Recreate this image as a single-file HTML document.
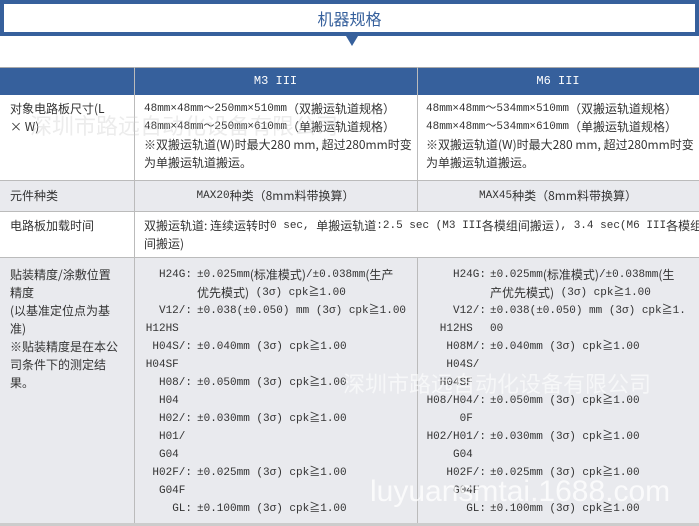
<!DOCTYPE html>
<html><head><meta charset="utf-8"><style>
*{margin:0;padding:0;box-sizing:border-box}
body{width:699px;height:526px;overflow:hidden;background:#fff;position:relative;font-family:"Liberation Mono","Noto Sans CJK SC",monospace;font-size:11px;color:#333}
.a{position:absolute;white-space:nowrap;line-height:18px}
.a div{height:18px;line-height:18px;white-space:nowrap}
.cj,.cj *{font-family:"Noto Sans CJK SC","WenQuanYi Zen Hei",sans-serif;font-size:12px;line-height:18px}
span{line-height:18px;vertical-align:top}
.m{font-family:"Liberation Mono",monospace;font-size:11px}
.r{text-align:right}
</style></head><body>
<div class="a" style="left:0;top:0;width:699px;height:36px;border:4px solid #36609c;background:#fff"></div>
<div class="a cj" style="left:0;top:6px;width:699px;text-align:center;font-size:16px;line-height:24px;color:#36609c">机器规格</div>
<div class="a" style="left:346px;top:36px;width:0;height:0;border-left:6px solid transparent;border-right:6px solid transparent;border-top:10px solid #36609c"></div>

<div class="a" style="left:0;top:67px;width:699px;height:28px;background:#36609c;border-top:1px solid #aaa"></div>
<div class="a" style="left:134px;top:72px;width:283px;text-align:center;color:#fff;font-size:12px">M3 III</div>
<div class="a" style="left:417px;top:72px;width:282px;text-align:center;color:#fff;font-size:12px">M6 III</div>

<div class="a" style="left:0;top:180px;width:699px;height:32px;background:#e9eaee;border-top:1px solid #bbb;border-bottom:1px solid #bbb"></div>
<div class="a" style="left:0;top:257px;width:699px;height:269px;background:#e9eaee;border-top:1px solid #bbb"></div>
<div class="a" style="left:134px;top:67px;width:1px;height:459px;background:#bbb"></div>
<div class="a" style="left:417px;top:67px;width:1px;height:145px;background:#bbb"></div>
<div class="a" style="left:417px;top:257px;width:1px;height:269px;background:#bbb"></div>
<div class="a" style="left:0;top:523px;width:699px;height:3px;background:#ccc"></div>

<div class="a cj" style="left:10px;top:100px"><div>对象电路板尺寸(L</div><div>× W)</div></div>
<div class="a" style="left:144px;top:100px">
<div>48mm×48mm～250mm×510mm<span class="cj">（双搬运轨道规格）</span></div>
<div>48mm×48mm～250mm×610mm<span class="cj">（单搬运轨道规格）</span></div>
<div class="cj">※双搬运轨道(W)时最大280 mm, 超过280mm时变</div>
<div class="cj">为单搬运轨道搬运。</div></div>
<div class="a" style="left:426px;top:100px">
<div>48mm×48mm～534mm×510mm<span class="cj">（双搬运轨道规格）</span></div>
<div>48mm×48mm～534mm×610mm<span class="cj">（单搬运轨道规格）</span></div>
<div class="cj">※双搬运轨道(W)时最大280 mm, 超过280mm时变</div>
<div class="cj">为单搬运轨道搬运。</div></div>

<div class="a cj" style="left:10px;top:187px">元件种类</div>
<div class="a" style="left:134px;top:187px;width:283px;text-align:center">MAX20<span class="cj">种类（8mm料带换算）</span></div>
<div class="a" style="left:417px;top:187px;width:282px;text-align:center">MAX45<span class="cj">种类（8mm料带换算）</span></div>

<div class="a cj" style="left:10px;top:217px">电路板加载时间</div>
<div class="a" style="left:144px;top:217px">
<div><span class="cj">双搬运轨道: 连续运转时</span>0 sec, <span class="cj">单搬运轨道</span>:2.5 sec (M3 III<span class="cj">各模组间搬运</span>), 3.4 sec(M6 III<span class="cj">各模组</span></div>
<div class="cj">间搬运)</div></div>

<div class="a cj" style="left:10px;top:266px"><div>贴装精度/涂敷位置</div><div>精度</div><div>(以基准定位点为基</div><div>准)</div><div>※贴装精度是在本公</div><div>司条件下的测定结</div><div>果。</div></div>

<div class="a r" style="left:140px;top:266px;width:52px">
<div>H24G:</div><div></div><div>V12/:</div><div>H12HS&nbsp;&nbsp;</div><div>H04S/:</div><div>H04SF&nbsp;&nbsp;</div><div>H08/:</div><div>H04&nbsp;&nbsp;</div><div>H02/:</div><div>H01/&nbsp;</div><div>G04&nbsp;&nbsp;</div><div>H02F/:</div><div>G04F&nbsp;</div><div>GL:</div></div>
<div class="a" style="left:197px;top:266px">
<div>±0.025mm<span class="cj">(标准模式)</span>/±0.038mm<span class="cj">(生产</span></div>
<div><span class="cj">优先模式)</span> (3σ) cpk≧1.00</div>
<div>±0.038(±0.050) mm (3σ) cpk≧1.00</div><div></div>
<div>±0.040mm (3σ) cpk≧1.00</div><div></div>
<div>±0.050mm (3σ) cpk≧1.00</div><div></div>
<div>±0.030mm (3σ) cpk≧1.00</div><div></div><div></div>
<div>±0.025mm (3σ) cpk≧1.00</div><div></div>
<div>±0.100mm (3σ) cpk≧1.00</div></div>

<div class="a r" style="left:420px;top:266px;width:66px">
<div>H24G:</div><div></div><div>V12/:</div><div>H12HS&nbsp;&nbsp;</div><div>H08M/:</div><div>H04S/&nbsp;</div><div>H04SF&nbsp;&nbsp;</div><div>H08/H04/:</div><div>0F&nbsp;&nbsp;</div><div>H02/H01/:</div><div>G04&nbsp;&nbsp;</div><div>H02F/:</div><div>G04F&nbsp;</div><div>GL:</div></div>
<div class="a" style="left:490px;top:266px">
<div>±0.025mm<span class="cj">(标准模式)</span>/±0.038mm<span class="cj">(生</span></div>
<div><span class="cj">产优先模式)</span> (3σ) cpk≧1.00</div>
<div>±0.038(±0.050) mm (3σ) cpk≧1.</div>
<div>00</div>
<div>±0.040mm (3σ) cpk≧1.00</div><div></div><div></div>
<div>±0.050mm (3σ) cpk≧1.00</div><div></div>
<div>±0.030mm (3σ) cpk≧1.00</div><div></div>
<div>±0.025mm (3σ) cpk≧1.00</div><div></div>
<div>±0.100mm (3σ) cpk≧1.00</div></div>

<div class="a cj" style="left:30px;top:112px;font-size:22px;line-height:26px;color:rgba(200,200,200,.35)">深圳市路远自动化设备有限公司</div>
<div class="a cj" style="left:343px;top:370px;font-size:22px;line-height:26px;color:rgba(255,255,255,.6)">深圳市路远自动化设备有限公司</div>
<div class="a" style="left:370px;top:474px;font-family:'Liberation Sans',sans-serif;font-size:30px;line-height:36px;color:rgba(255,255,255,.75)">luyuansmtai.1688.com</div>
</body></html>
